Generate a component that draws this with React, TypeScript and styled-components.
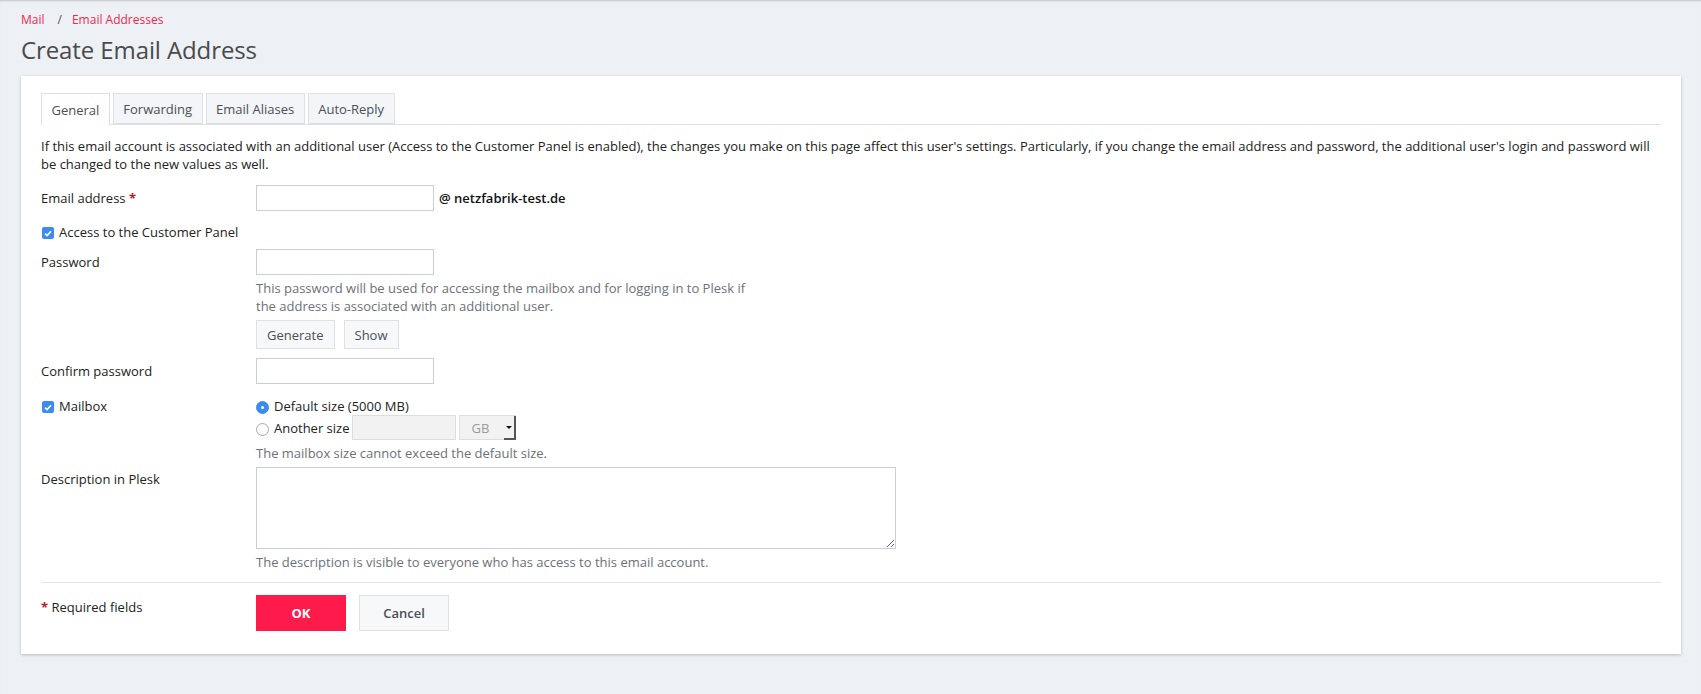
import React from 'react';
import styled, { createGlobalStyle } from 'styled-components';

const GlobalStyle = createGlobalStyle`
  html, body {
    margin: 0;
    padding: 0;
    background: #edf0f4;
  }
  body {
    font-family: "Open Sans", "Noto Sans", sans-serif;
    font-size: 13px;
    color: #222;
  }
`;

const Page = styled.div`
  position: relative;
  min-height: 100vh;
  box-sizing: border-box;
  padding: 12px 20px 30px 21px;
  border-left: 2px solid #d9dce1;
  box-shadow: inset 0 2px 2px -1px rgba(0, 0, 0, 0.18);
  margin-left: -2px;

  &::before {
    content: '';
    position: absolute;
    left: -2px;
    top: 85px;
    width: 2px;
    height: 40px;
    background: #2b2f36;
  }
`;

const Breadcrumbs = styled.div`
  display: flex;
  align-items: center;
  line-height: 16px;
  font-size: 12px;
`;

const Crumb = styled.a`
  color: #f0294f;
  text-decoration: none;
`;

const Sep = styled.span`
  color: #555;
  margin: 0 10px 0 13px;
`;

const Title = styled.h1`
  margin: 6px 0 10px;
  font-size: 24px;
  font-weight: 400;
  line-height: 32px;
  color: #4a4a4a;
  letter-spacing: -0.1px;
`;

const Card = styled.div`
  background: #fff;
  box-shadow: 0 1px 3px rgba(0, 0, 0, 0.22);
  padding: 17px 20px 23px;
`;

const Tabs = styled.div`
  display: flex;
  gap: 3px;
  border-bottom: 1px solid #dde0e5;
  height: 31px;
`;

const Tab = styled.div<{ $active?: boolean }>`
  box-sizing: border-box;
  height: ${(p) => (p.$active ? '32px' : '31px')};
  padding: 0 9.5px;
  display: flex;
  align-items: center;
  font-size: 13px;
  color: #4b4f56;
  background: ${(p) => (p.$active ? '#fff' : '#f3f5f8')};
  border: 1px solid #dde0e5;
  border-bottom: ${(p) => (p.$active ? 'none' : '1px solid #dde0e5')};
`;

const Intro = styled.p`
  margin: 12px 0 12px;
  line-height: 18px;
  color: #222;
`;

const Row = styled.div<{ $gap?: number }>`
  display: grid;
  grid-template-columns: 215px 1fr;
  margin-bottom: ${(p) => p.$gap ?? 10}px;
`;

const Label = styled.div<{ $top?: number }>`
  padding-top: ${(p) => p.$top ?? 4}px;
  line-height: 18px;
  color: #222;
`;

const Required = styled.span`
  color: #c0142c;
  font-weight: 700;
`;

const Field = styled.div`
  display: flex;
  flex-direction: column;
  align-items: flex-start;
`;

const Inline = styled.div`
  display: flex;
  align-items: center;
`;

const TextInput = styled.input`
  box-sizing: border-box;
  width: 178px;
  height: 26px;
  border: 1px solid #c9ced8;
  border-radius: 0;
  padding: 0 6px;
  font: inherit;
  outline: none;
`;

const Domain = styled.span`
  margin-left: 5px;
  font-weight: 600;
  color: #111;
`;

const Hint = styled.div<{ $w?: number }>`
  color: #6d7178;
  line-height: 18px;
  margin-top: 4px;
  max-width: ${(p) => p.$w ?? 700}px;
`;

const ButtonBar = styled.div`
  display: flex;
  gap: 9px;
  margin-top: 5px;
`;

const SmallButton = styled.button`
  box-sizing: border-box;
  height: 29px;
  padding: 0 10px;
  background: #f7f8fa;
  border: 1px solid #dde0e5;
  font: inherit;
  color: #4b4f56;
`;

const CheckLabel = styled.label<{ $top?: boolean }>`
  display: flex;
  align-items: ${(p) => (p.$top ? 'flex-start' : 'center')};
  gap: 5px;
  line-height: 18px;
  color: #222;
`;

const Box = styled.span<{ $offset?: number }>`
  width: 12px;
  height: 12px;
  margin-left: 1px;
  margin-top: ${(p) => p.$offset ?? 2}px;
  border-radius: 2px;
  background: #3b8cee;
  display: inline-flex;
  align-items: center;
  justify-content: center;
`;

const Radio = styled.span<{ $on?: boolean }>`
  box-sizing: border-box;
  width: 13px;
  height: 13px;
  margin-top: 3px;
  border-radius: 50%;
  background: ${(p) => (p.$on ? '#3b8cee' : '#fff')};
  border: 1px solid ${(p) => (p.$on ? '#3b8cee' : '#a9a9a9')};
  display: inline-flex;
  align-items: center;
  justify-content: center;

  &::after {
    content: '';
    width: 3px;
    height: 3px;
    border-radius: 50%;
    background: ${(p) => (p.$on ? '#fff' : 'transparent')};
  }
`;

const RadioLine = styled.label`
  display: flex;
  align-items: center;
  gap: 5px;
  line-height: 18px;
  color: #222;
`;

const SizeInput = styled.input`
  box-sizing: border-box;
  width: 104px;
  height: 25px;
  margin-left: 3px;
  background: #f2f2f2;
  border: 1px solid #dedede;
  font: inherit;
`;

const UnitSelect = styled.div`
  box-sizing: border-box;
  position: relative;
  width: 57px;
  height: 25px;
  margin-left: 3px;
  background: #f2f2f2;
  border: 1px solid #dedede;
  color: #9a9a9a;
  display: flex;
  align-items: center;
  padding-left: 11px;
`;

const Arrow = styled.span`
  position: absolute;
  right: -1px;
  top: 0;
  width: 12px;
  height: 24px;
  box-sizing: border-box;
  border-right: 2px solid #555;
  border-bottom: 2px solid #555;
  display: flex;
  align-items: center;
  justify-content: center;

  &::after {
    content: '';
    border-left: 3px solid transparent;
    border-right: 3px solid transparent;
    border-top: 3px solid #111;
  }
`;

const TextArea = styled.textarea`
  box-sizing: border-box;
  width: 640px;
  height: 82px;
  border: 1px solid #c9ced8;
  border-radius: 0;
  font: inherit;
  outline: none;
  display: block;
`;

const Divider = styled.div`
  border-top: 1px solid #e3e5e9;
  margin: 11px 0 12px;
`;

const FooterLabel = styled.div`
  padding-top: 3px;
  line-height: 18px;
`;

const OkButton = styled.button`
  width: 90px;
  height: 36px;
  border: none;
  background: #fe1a4b;
  color: #fff;
  font: inherit;
  font-weight: 700;
`;

const CancelButton = styled.button`
  box-sizing: border-box;
  width: 90px;
  height: 36px;
  background: #f7f8fa;
  border: 1px solid #dde0e5;
  font: inherit;
  font-weight: 600;
  color: #4b4f56;
`;

const Footer = styled.div`
  display: flex;
  gap: 13px;
`;

const Tick = () => (
  <svg width="8" height="7" viewBox="0 0 8 7">
    <path d="M1 3.6 L3.1 5.6 L7 1.2" fill="none" stroke="#fff" strokeWidth="1.6" />
  </svg>
);

function App() {
  return (
    <>
      <GlobalStyle />
      <Page>
        <Breadcrumbs>
          <Crumb href="#">Mail</Crumb>
          <Sep>/</Sep>
          <Crumb href="#">Email Addresses</Crumb>
        </Breadcrumbs>
        <Title>Create Email Address</Title>
        <Card>
          <Tabs>
            <Tab $active>General</Tab>
            <Tab>Forwarding</Tab>
            <Tab>Email Aliases</Tab>
            <Tab>Auto-Reply</Tab>
          </Tabs>
          <Intro>
            If this email account is associated with an additional user (Access to the Customer Panel is enabled), the changes you make on this page affect this user's settings. Particularly, if you change the email address and password, the additional user's login and password will be changed to the new values as well.
          </Intro>

          <Row $gap={12}>
            <Label>
              Email address <Required>*</Required>
            </Label>
            <Inline>
              <TextInput />
              <Domain>@ netzfabrik-test.de</Domain>
            </Inline>
          </Row>

          <Row $gap={8}>
            <CheckLabel>
              <Box>
                <Tick />
              </Box>
              Access to the Customer Panel
            </CheckLabel>
          </Row>

          <Row $gap={9}>
            <Label>Password</Label>
            <Field>
              <TextInput type="password" />
              <Hint $w={505}>
                This password will be used for accessing the mailbox and for logging in to Plesk if the address is associated with an additional user.
              </Hint>
              <ButtonBar>
                <SmallButton>Generate</SmallButton>
                <SmallButton>Show</SmallButton>
              </ButtonBar>
            </Field>
          </Row>

          <Row $gap={13}>
            <Label>Confirm password</Label>
            <Field>
              <TextInput type="password" />
            </Field>
          </Row>

          <Row $gap={5}>
            <CheckLabel $top>
              <Box $offset={4}>
                <Tick />
              </Box>
              Mailbox
            </CheckLabel>
            <Field>
              <RadioLine>
                <Radio $on />
                Default size (5000 MB)
              </RadioLine>
              <Inline>
                <RadioLine>
                  <Radio />
                  Another size
                </RadioLine>
                <SizeInput disabled />
                <UnitSelect>
                  GB
                  <Arrow />
                </UnitSelect>
              </Inline>
              <Hint>The mailbox size cannot exceed the default size.</Hint>
            </Field>
          </Row>

          <Row $gap={0}>
            <Label $top={3}>Description in Plesk</Label>
            <Field>
              <TextArea />
              <Hint>The description is visible to everyone who has access to this email account.</Hint>
            </Field>
          </Row>

          <Divider />

          <Row $gap={0}>
            <FooterLabel>
              <Required>*</Required> Required fields
            </FooterLabel>
            <Footer>
              <OkButton>OK</OkButton>
              <CancelButton>Cancel</CancelButton>
            </Footer>
          </Row>
        </Card>
      </Page>
    </>
  );
}

export default App;
